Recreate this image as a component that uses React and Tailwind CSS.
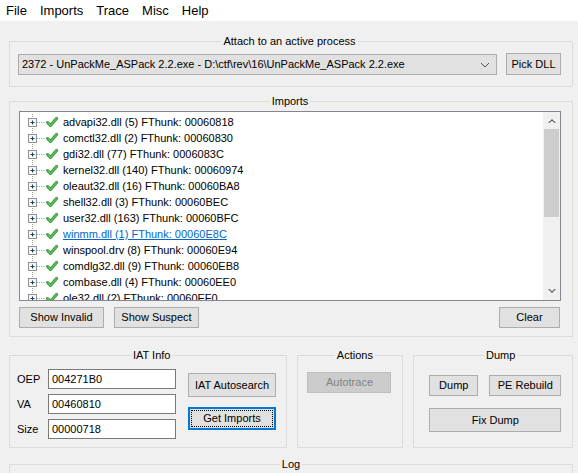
import React from "react";

const imports = [
  { text: "advapi32.dll (5) FThunk: 00060818" },
  { text: "comctl32.dll (2) FThunk: 00060830" },
  { text: "gdi32.dll (77) FThunk: 0006083C" },
  { text: "kernel32.dll (140) FThunk: 00060974" },
  { text: "oleaut32.dll (16) FThunk: 00060BA8" },
  { text: "shell32.dll (3) FThunk: 00060BEC" },
  { text: "user32.dll (163) FThunk: 00060BFC" },
  { text: "winmm.dll (1) FThunk: 00060E8C", hot: true },
  { text: "winspool.drv (8) FThunk: 00060E94" },
  { text: "comdlg32.dll (9) FThunk: 00060EB8" },
  { text: "combase.dll (4) FThunk: 00060EE0" },
  { text: "ole32.dll (2) FThunk: 00060EF0" },
];

const Btn = ({ children, className = "" }) => (
  <div
    className={`flex items-center justify-center bg-[#e1e1e1] border border-[#adadad] text-black ${className}`}
  >
    {children}
  </div>
);

const Group = ({ title, className = "", children }) => (
  <fieldset className={`border border-[#dcdcdc] min-w-0 ${className}`}>
    <legend className="mx-auto px-[2px] leading-[13px]">{title}</legend>
    {children}
  </fieldset>
);

// tree connector + expander box
const TreeGlyph = () => (
  <svg width="26" height="16" viewBox="0 0 26 16" className="shrink-0">
    <line x1="12.5" y1="0" x2="12.5" y2="16" stroke="#a0a0a0" strokeDasharray="1 1" />
    <line x1="17" y1="8.5" x2="25" y2="8.5" stroke="#a0a0a0" strokeDasharray="1 1" />
    <rect x="8.5" y="4.5" width="8" height="8" fill="#f7f7f7" stroke="#919191" />
    <line x1="10.5" y1="8.5" x2="14.5" y2="8.5" stroke="#1c3d6e" />
    <line x1="12.5" y1="6.5" x2="12.5" y2="10.5" stroke="#1c3d6e" />
  </svg>
);

const Check = () => (
  <svg width="12" height="12" viewBox="0 0 12 12" className="shrink-0">
    <path d="M1.5 6.5 L4.5 9.5 L10.5 2.5" fill="none" stroke="#2f8a36" strokeWidth="3" strokeLinecap="round" strokeLinejoin="round" />
    <path d="M1.5 6.5 L4.5 9.5 L10.5 2.5" fill="none" stroke="#5cc45e" strokeWidth="1.6" strokeLinecap="round" strokeLinejoin="round" />
  </svg>
);

const Input = ({ value }) => (
  <div className="w-[128px] h-[20px] bg-white border border-[#7a7a7a] flex items-center pl-[3px]">
    {value}
  </div>
);

export default function App() {
  return (
    <div className="w-[578px] h-[473px] overflow-hidden bg-[#f0f0f0] text-[11px] text-black font-['Liberation_Sans',Arial,sans-serif]">
      {/* MENU */}
      <div className="h-[21px] bg-white flex items-center gap-[13px] pl-[6px] text-[13px]">
        <span>File</span>
        <span>Imports</span>
        <span>Trace</span>
        <span>Misc</span>
        <span>Help</span>
      </div>

      <div className="pl-[9px] pr-[5px]">
        {/* ATTACH */}
        <Group title="Attach to an active process" className="mt-[14px] pl-[8px] pr-[11px] pt-[5px] pb-[11px]">
          <div className="flex items-end gap-[9px]">
            <div className="flex-1 h-[21px] bg-[#e1e1e1] border border-[#adadad] flex items-center pl-[3px]">
              <span className="flex-1">
                2372 - UnPackMe_ASPack 2.2.exe - D:\ctf\rev\16\UnPackMe_ASPack 2.2.exe
              </span>
              <svg width="10" height="6" viewBox="0 0 10 6" className="mr-[6px]">
                <path d="M1 1 L5 5 L9 1" fill="none" stroke="#555" strokeWidth="1" />
              </svg>
            </div>
            <Btn className="w-[55px] h-[22px]">Pick DLL</Btn>
          </div>
        </Group>

        {/* IMPORTS */}
        <Group title="Imports" className="mt-[8px] pl-[9px] pr-[11px] pt-[3px] pb-[8px]">
          <div className="h-[190px] bg-white border border-[#828790] flex overflow-hidden">
            <div className="flex-1 pt-[2px] overflow-hidden">
              {imports.map((row) => (
                <div key={row.text} className="h-[16px] flex items-center whitespace-nowrap">
                  <TreeGlyph />
                  <Check />
                  <span className={`ml-[5px] ${row.hot ? "text-[#0066cc] underline" : ""}`}>{row.text}</span>
                </div>
              ))}
            </div>
            {/* SCROLLBAR */}
            <div className="w-[17px] bg-[#f0f0f0] flex flex-col">
              <div className="h-[17px] flex items-center justify-center">
                <svg width="8" height="5" viewBox="0 0 8 5">
                  <path d="M0 5 L4 1 L8 5 L6.5 5 L4 2.8 L1.5 5 Z" fill="#606060" />
                </svg>
              </div>
              <div className="mx-[1px] h-[88px] bg-[#cdcdcd]" />
              <div className="flex-1" />
              <div className="h-[17px] flex items-center justify-center">
                <svg width="8" height="5" viewBox="0 0 8 5">
                  <path d="M0 0 L4 4 L8 0 L6.5 0 L4 2.2 L1.5 0 Z" fill="#606060" />
                </svg>
              </div>
            </div>
          </div>
          <div className="flex mt-[6px] gap-[10px]">
            <Btn className="w-[85px] h-[21px]">Show Invalid</Btn>
            <Btn className="w-[85px] h-[21px]">Show Suspect</Btn>
            <div className="flex-1" />
            <Btn className="w-[61px] h-[21px] mr-[1px]">Clear</Btn>
          </div>
        </Group>

        {/* BOTTOM ROW */}
        <div className="flex gap-[10px] mt-[12px] h-[99px]">
          <Group title="IAT Info" className="w-[279px] pl-[7px] pt-[7px]">
            <div className="flex">
              <div className="flex flex-col gap-[5px]">
                {[
                  ["OEP", "004271B0"],
                  ["VA", "00460810"],
                  ["Size", "00000718"],
                ].map(([label, value]) => (
                  <div key={label} className="flex items-center">
                    <span className="w-[31px]">{label}</span>
                    <Input value={value} />
                  </div>
                ))}
              </div>
              <div className="flex flex-col ml-[12px] pt-[4px] gap-[10px]">
                <Btn className="w-[88px] h-[24px]">IAT Autosearch</Btn>
                <div className="w-[88px] h-[23px] bg-[#e1e1e1] border-2 border-[#0078d7] p-[1px]">
                  <div className="w-full h-full border border-dotted border-black flex items-center justify-center">
                    Get Imports
                  </div>
                </div>
              </div>
            </div>
          </Group>

          <Group title="Actions" className="w-[106px] pl-[9px] pt-[10px]">
            <div className="w-[84px] h-[21px] bg-[#cccccc] border border-[#bfbfbf] text-[#838383] flex items-center justify-center">
              Autotrace
            </div>
          </Group>

          <Group title="Dump" className="w-[160px] pl-[15px] pt-[13px]">
            <div className="flex gap-[11px]">
              <Btn className="w-[49px] h-[21px]">Dump</Btn>
              <Btn className="w-[72px] h-[21px]">PE Rebuild</Btn>
            </div>
            <Btn className="w-[132px] h-[24px] mt-[12px]">Fix Dump</Btn>
          </Group>
        </div>

        {/* LOG */}
        <Group title="Log" className="mt-[10px] h-[80px]" />
      </div>
    </div>
  );
}
